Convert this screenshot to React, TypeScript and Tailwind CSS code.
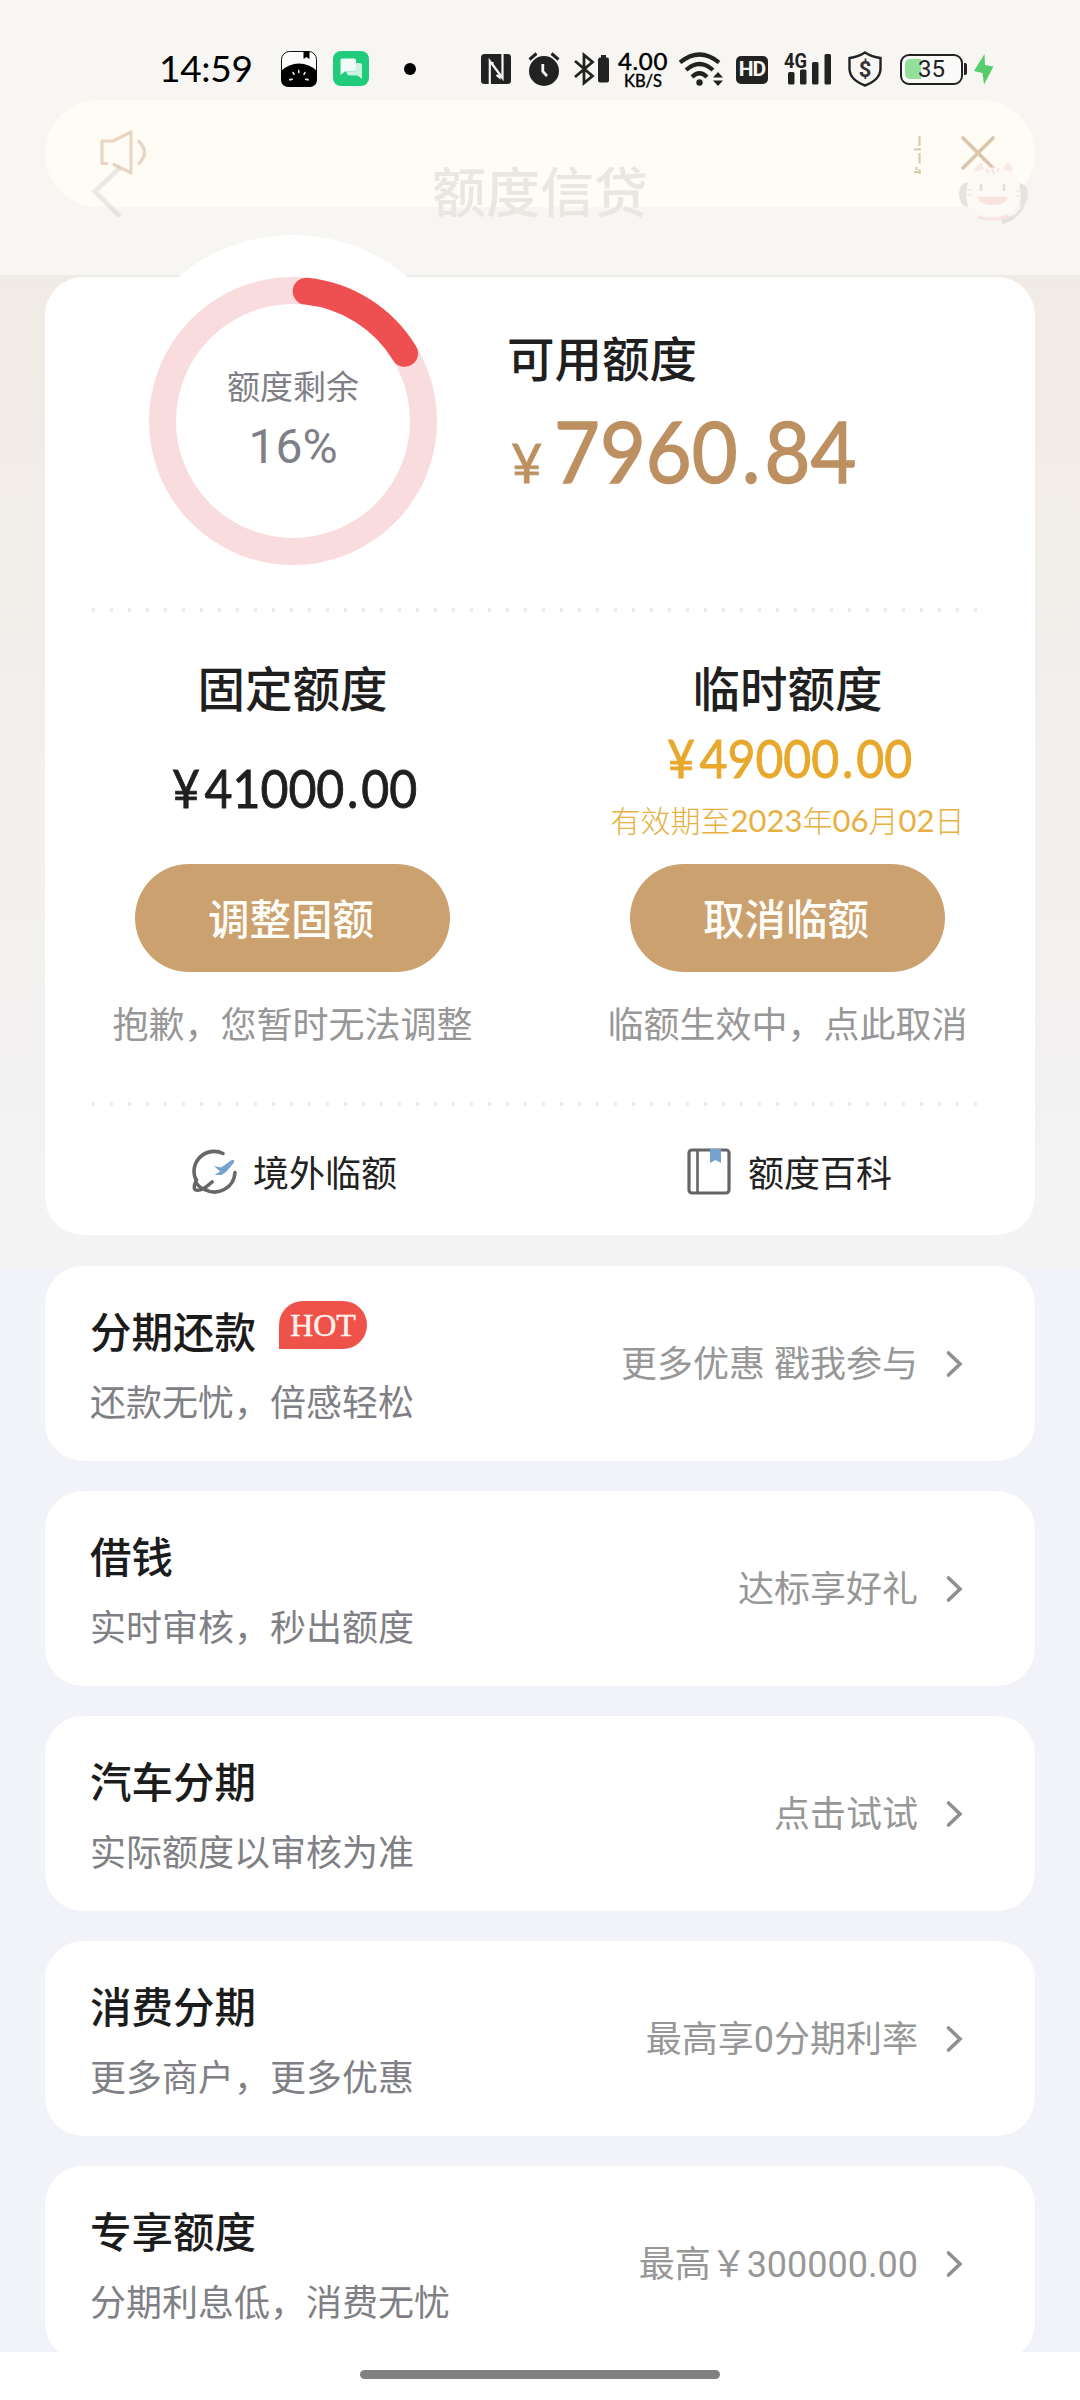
import { ReactNode } from "react";

const services = [
  { title: "分期还款", desc: "还款无忧，倍感轻松", action: "更多优惠 戳我参与", hot: true },
  { title: "借钱", desc: "实时审核，秒出额度", action: "达标享好礼" },
  { title: "汽车分期", desc: "实际额度以审核为准", action: "点击试试" },
  { title: "消费分期", desc: "更多商户，更多优惠", action: "最高享0分期利率" },
  { title: "专享额度", desc: "分期利息低，消费无忧", action: "最高￥300000.00" },
];

function StatusBar() {
  return (
    <div className="flex h-[100px] items-center pt-[38px] pl-[159px] font-['Lato','Noto_Sans_CJK_SC',sans-serif] text-black">
      <span className="w-[94px] pb-[3px] text-[37px] leading-none tracking-[-0.3px]">14:59</span>

      {/* notification icons */}
      <svg className="ml-[28px] h-9 w-9" viewBox="0 0 36 36">
        <rect x="0.5" y="0.5" width="35" height="35" rx="8" fill="#fdfdfd" stroke="#111" />
        <path d="M0 20 Q8 12.500 18 12.500 Q28 12.500 36 20 V28 Q36 36 28 36 H8 Q0 36 0 28 Z" fill="#000" />
        <path d="M22.500 0 H28.500 V8 L25.500 6 L22.500 8 Z" fill="#000" />
        <g fill="#eee">
          <ellipse cx="17.800" cy="20.500" rx="0.800" ry="2" />
          <ellipse cx="12.500" cy="22.500" rx="0.800" ry="2" transform="rotate(-30 12.5 22.5)" />
          <ellipse cx="23.500" cy="22.500" rx="0.800" ry="2" transform="rotate(30 23.5 22.5)" />
          <ellipse cx="10" cy="28.500" rx="2.200" ry="0.900" transform="rotate(-10 10 28.5)" />
          <ellipse cx="25.800" cy="28.500" rx="2.200" ry="0.900" transform="rotate(10 25.8 28.5)" />
        </g>
      </svg>
      <svg className="ml-4 h-9 w-9" viewBox="0 0 36 36">
        <rect width="36" height="35" rx="8" fill="#20cb7b" />
        <path d="M9 7.500 H21 Q23 7.500 23 9.500 V18 Q23 20.500 20.500 20.500 H12 L7.500 24 V9.500 Q7.500 7.500 9 7.500 Z" fill="#f2fcf7" />
        <path d="M16 12 H26.500 Q29 12 29 14.500 V28 L24.500 24.500 H17 Q13.500 24.500 13.500 20.500 H20 Q23 20.500 23 18 V12 Z" fill="#c9f3df" />
      </svg>
      <span className="ml-[35px] h-3 w-3 rounded-full bg-black" />

      {/* system icons */}
      <svg className="ml-[65px] h-[30px] w-[30px]" viewBox="0 0 30 30">
        <rect width="30" height="30" rx="3.500" fill="#222" />
        <path d="M8.800 30 V7 L18.500 20 V23.500 L15.500 21 M21.500 0 V24 L11.500 10.500 V8" fill="none" stroke="#f7f6f3" strokeWidth="2.200" />
      </svg>
      <svg className="ml-[17px] h-[34px] w-[32px]" viewBox="0 0 32 34">
        <circle cx="16" cy="19" r="15" fill="#222" />
        <path d="M1.500 7.500 L8.500 1.500 M30.500 7.500 L23.500 1.500" stroke="#222" strokeWidth="3" />
        <path d="M14.800 12 V19.500 L19 24" fill="none" stroke="#f7f6f3" strokeWidth="2.800" />
      </svg>
      <svg className="ml-[14px] h-[34px] w-[35px]" viewBox="0 0 35 34">
        <path d="M1 9 L18.500 24 L10 31 V3 L18.500 10 L1 25" fill="none" stroke="#222" strokeWidth="2.800" />
        <rect x="24" y="5.500" width="11" height="25" rx="2" fill="#222" />
        <rect x="27" y="3" width="5" height="3" fill="#222" />
      </svg>
      <div className="ml-[7px] flex w-[54px] flex-col items-center">
        <span className="text-[24px] leading-[23px] tracking-[0.6px] [-webkit-text-stroke:0.5px_black]">4.00</span>
        <span className="text-[16.500px] leading-[18px] [-webkit-text-stroke:0.4px_black]">KB/S</span>
      </div>
      <svg className="ml-[9px] h-[34px] w-[46px]" viewBox="0 0 46 34">
        <g fill="none" stroke="#222" strokeWidth="4.200">
          <path d="M1 10.500 Q20.500 -5.500 40 10.500" />
          <path d="M7 18 Q20.500 6 34 18" />
          <path d="M13 25 Q20.500 17.500 28 25" />
        </g>
        <circle cx="20.500" cy="30.500" r="3.200" fill="#222" />
        <path d="M34 25.500 L39 20 L44 25.500 Z M34 28.500 L39 34 L44 28.500 Z" fill="#222" />
      </svg>
      <span className="mt-px ml-[11px] flex h-7 w-8 items-center justify-center rounded-[5px] bg-[#222] font-['Roboto',sans-serif] text-[21px] leading-none font-bold tracking-[-1px] text-[#f7f6f3]">
        HD
      </span>
      <svg className="ml-4 h-[34px] w-12 overflow-visible" viewBox="0 0 48 34">
        <text x="0" y="15.5" fontSize="20" fontWeight="700" textLength="23" lengthAdjust="spacingAndGlyphs" fill="#222" fontFamily="Roboto, sans-serif">
          4G
        </text>
        <g fill="#222">
          <rect x="4" y="20" width="6.500" height="12.500" rx="1.500" />
          <rect x="16" y="17.500" width="6.500" height="15" rx="1.500" />
          <rect x="28" y="10" width="6.500" height="22.500" rx="1.500" />
          <rect x="40.500" y="2" width="6.500" height="30.500" rx="1.500" />
        </g>
      </svg>
      <svg className="ml-[16px] h-9 w-[34px]" viewBox="0 0 34 36">
        <path d="M17 1.500 Q24 6 32.500 7 V18 Q32 29 17 34.500 Q2 29 1.500 18 V7 Q10 6 17 1.500 Z" fill="none" stroke="#222" strokeWidth="2.400" />
        <text x="17" y="25.500" textAnchor="middle" fontSize="22" fontWeight="700" fill="#333" fontFamily="Roboto, sans-serif">
          $
        </text>
      </svg>
      <div className="relative ml-[18px] flex h-[31px] w-[63px] items-center justify-center rounded-[9px] border-[2.5px] border-[#222] bg-[#fafaf9]">
        <span className="absolute top-[3px] left-[2.5px] h-5 w-[16px] rounded-l-[5px] bg-[#92e09c]" />
        <span className="relative font-['Roboto',sans-serif] text-[24px] leading-none text-[#222]">35</span>
      </div>
      <span className="ml-px h-3 w-[3px] rounded-r-[2px] bg-[#222]" />
      <svg className="ml-[7px] h-8 w-5" viewBox="0 0 20 32">
        <path d="M10.500 1 L0 18 L8.500 20 L10 31.500 L19.500 13.500 L11 12 Z" fill="#55cd6d" />
      </svg>
    </div>
  );
}

function NoticePill() {
  return (
    <div className="absolute top-[100px] left-[45px] flex h-[107px] w-[990px] items-start rounded-full bg-[#fefcf5] pt-[29px] pl-[53px]">
      <svg className="h-[48px] w-[52px]" viewBox="0 0 52 48" fill="none" stroke="#e8d5c4" strokeWidth="3.200" strokeLinecap="round" strokeLinejoin="round">
        <path d="M9 34.500 H4 V12 H15 L33 3 V44 L16 35.500" />
        <path d="M41 12.500 Q52 23.500 41 34.500" />
      </svg>
      <svg className="mt-[7px] ml-[763px] h-[38px] w-[10px]" viewBox="0 0 10 38" fill="none" stroke="#d9ccb2" strokeWidth="2.200">
        <path d="M6.500 0 V10 M1 13.500 H8 M6.500 12 V14.500 M6.500 17 V27.500 M3.500 31 V34 M1 36 H8 M6.500 33 V38" />
      </svg>
      <svg className="mt-[6px] ml-[37px] h-[36px] w-[36px]" viewBox="0 0 36 36" stroke="#dcc6ae" strokeWidth="3.600" strokeLinecap="round">
        <path d="M3 3 L33 33 M33 3 L3 33" />
      </svg>
    </div>
  );
}

function NavBar() {
  return (
    <div className="relative flex h-[175px] items-start pt-[60px] pl-[90px]">
      <svg className="mt-[4px] h-[56px] w-[72px]" viewBox="0 0 72 56" fill="none" stroke="#b9b8b6" strokeOpacity="0.28" strokeWidth="5">
        <path d="M30 3.500 L5 27.500 L30 52.500" />
      </svg>
      <h1 className="mt-[2px] ml-[270px] w-[216px] text-[54px] leading-[66px] font-medium text-[#eae7e2]">额度信贷</h1>
      {/* customer service mascot */}
      <svg className="-mt-[8px] ml-[310px] h-[72px] w-[72px]" viewBox="0 0 72 72" fill="none">
        <path d="M13 24 Q36 8 59 24 Q68 44 56 58 Q36 70 16 58 Q4 44 13 24 Z" fill="#fdfaf5" />
        <path d="M16 20 Q17 11 24 11 Q25 13 26 17 Z M45 17 Q47 11 52 11 Q55 14 54 20 Z" fill="#fbe9e4" />
        <path d="M28 17 L31 21 M34 15 L36 23 M41 16 L39 20" stroke="#fae6e1" strokeWidth="2.200" />
        <path d="M10 30 Q1 31 1 43 Q2 54 10 55 L8 43 Z M61 31 Q70 32 70 43 Q69 53 62 55 L63 43 Z" fill="#e5e3df" />
        <path d="M8 38 H14 M8 43 H14 M58 39 H64 M58 44 H64" stroke="#eeece8" strokeWidth="1.500" />
        <path d="M23 32 V39 M46 32 V39" stroke="#e3e0db" strokeWidth="2.600" />
        <path d="M19 44.500 H50 Q48 53 34.500 53 Q21 53 19 44.500 Z" fill="#f9e4df" />
        <path d="M20 65 Q35 70 50 64" stroke="#f9e4e2" strokeWidth="3" />
        <path d="M66 52 Q62 63 51 67" stroke="#e5e4e0" strokeWidth="2.500" />
        <path d="M56 65 L44 70" stroke="#e2e1dd" strokeWidth="4.500" />
      </svg>
    </div>
  );
}

function QuotaRing() {
  // 16% of the circumference, starting just past twelve o'clock
  const length = 2 * Math.PI * 130.5;
  return (
    <div className="relative h-[288px] w-[288px]">
      <svg className="absolute inset-0" viewBox="0 0 288 288" fill="none" strokeWidth="27">
        <circle cx="144" cy="144" r="130.500" stroke="#f9dcdd" />
        <circle
          cx="144"
          cy="144"
          r="130.500"
          stroke="#ee5052"
          strokeLinecap="round"
          strokeDasharray={`${length * 0.147} ${length}`}
          transform="rotate(-84.2 144 144)"
        />
      </svg>
      <div className="relative flex flex-col items-center pt-[91px] text-[#7f8087]">
        <span className="text-[33px] leading-[40px]">额度剩余</span>
        <span className="mt-[13px] text-[48px] leading-[52px]">16%</span>
      </div>
    </div>
  );
}

function DottedLine() {
  return (
    <svg className="ml-[47px] block h-1 w-[886px]" viewBox="0 0 886 4">
      <path d="M0 2 H886" stroke="#ececec" strokeWidth="4" strokeDasharray="3 15" />
    </svg>
  );
}

function QuotaColumn({ title, button, hint, children }: { title: string; button: string; hint: string; children: ReactNode }) {
  return (
    <div className="flex flex-1 flex-col items-center">
      <h2 className="mt-[49px] text-[47.500px] leading-[60px] font-medium text-[#1f1f1f]">{title}</h2>
      <div className="flex h-[143px] flex-col items-center">{children}</div>
      <button className="h-[108px] w-[315px] rounded-full bg-[#cba16f] pt-[6px] pr-[3px] text-[41.500px] font-medium text-[#fffdf8]">{button}</button>
      <p className="mt-[32px] text-[36px] leading-[44px] text-[#979797]">{hint}</p>
    </div>
  );
}

function QuotaCard() {
  return (
    <section className="relative mx-[45px] h-[958px] rounded-[38px] bg-white">
      <span className="absolute -top-[42px] left-[70px] h-[356px] w-[356px] rounded-full bg-white" />

      <div className="relative flex h-[331px]">
        <div className="flex w-[462px] pl-[104px]">
          <QuotaRing />
        </div>
        <div className="pt-[54px]">
          <h2 className="text-[47.500px] leading-[60px] font-medium text-[#1f1f1f]">可用额度</h2>
          <div className="mt-[16px] flex items-baseline font-['Lato','Noto_Sans_CJK_SC',sans-serif] text-[#bd9062]">
            <span className="w-[47px] pl-[4px] text-[54px] leading-[86px] [-webkit-text-stroke:0.8px_#bd9062]">¥</span>
            <span className="origin-left scale-x-[0.92] text-[86px] leading-[86px] [-webkit-text-stroke:1.5px_#bd9062]">
              7960<span className="px-[4.5px]">.</span>84
            </span>
          </div>
        </div>
      </div>

      <DottedLine />

      <div className="flex h-[490px]">
        <QuotaColumn title="固定额度" button="调整固额" hint="抱歉，您暂时无法调整">
          <span className="mt-[37px] scale-x-[0.91] pl-[4px] font-['Lato',sans-serif] text-[53px] leading-[60px] text-[#1f1f1f] [-webkit-text-stroke:0.9px_#1f1f1f]">
            <span className="pr-[5px]">¥</span>41000<span className="px-[3px]">.</span>00
          </span>
        </QuotaColumn>
        <QuotaColumn title="临时额度" button="取消临额" hint="临额生效中，点此取消">
          <span className="mt-[7px] scale-x-[0.91] pl-[5px] font-['Lato',sans-serif] text-[53px] leading-[60px] text-[#e8a82c] [-webkit-text-stroke:0.9px_#e8a82c]">
            <span className="pr-[5px]">¥</span>49000<span className="px-[3px]">.</span>00
          </span>
          <span className="mt-[12px] font-['Lato','Noto_Sans_CJK_SC',sans-serif] text-[30px] leading-[40px] font-light text-[#e8b040]">
            有效期至<b className="text-[31px] font-normal">2023</b>年<b className="text-[31px] font-normal">06</b>月<b className="text-[31px] font-normal">02</b>日
          </span>
        </QuotaColumn>
      </div>

      <DottedLine />

      <div className="flex h-[126px] pt-[42px] text-[36px] leading-[50px] text-[#222]">
        <div className="flex flex-1 pl-[147px]">
          <svg className="mt-px mr-[15px] h-[46px] w-[46px]" viewBox="0 0 46 46" fill="none" strokeLinecap="round" strokeLinejoin="round">
            <g stroke="#666769" strokeWidth="3.600">
              <path d="M31 4.500 A20 20 0 0 0 4 31" />
              <path d="M43 23.500 A20.500 20.500 0 0 1 12 40" />
              <path d="M4.500 31 Q1 38 3 40.500 Q8 44 20 33" />
              <path d="M5 35 Q9 40 14 41" />
            </g>
            <path d="M22 17 L29 18.500 L39 11.500 Q43 9.500 42 13.500 L37.500 19 Q34 24 29.500 26 L22.500 26 L28 22.500 Z" fill="#76a2cf" />
          </svg>
          <span className="pt-[2px]">境外临额</span>
        </div>
        <div className="flex flex-1 pl-[147px]">
          <svg className="mr-[17px] h-[47px] w-[44px]" viewBox="0 0 44 47" fill="none">
            <rect x="2" y="2" width="40" height="43" rx="3" stroke="#646567" strokeWidth="3.200" />
            <path d="M10.500 2 V45" stroke="#646567" strokeWidth="2.600" />
            <path d="M23 1 H34 V15 L28.500 12 L23 15 Z" fill="#76a2cf" />
          </svg>
          <span className="pt-[2px]">额度百科</span>
        </div>
      </div>
    </section>
  );
}

export default function App() {
  return (
    <main className="relative flex h-[2400px] w-[1080px] flex-col overflow-hidden bg-[#f2f3f8] font-['Roboto','Noto_Sans_CJK_SC',sans-serif]">
      <header className="relative h-[275px] shrink-0 bg-[#f7f6f3]">
        <NoticePill />
        <StatusBar />
        <NavBar />
      </header>

      <div className="h-[991px] shrink-0 bg-linear-to-b from-[#f1ebe5] to-[#f4f4f5]">
        <div className="mx-[80px] h-0.5 bg-[#ebece9]" />
        <QuotaCard />
      </div>

      <div className="flex h-[1086px] shrink-0 flex-col gap-[30px] overflow-hidden px-[45px]">
        {services.map((s) => (
          <section key={s.title} className="flex h-[195px] shrink-0 items-center rounded-[38px] bg-white pr-[70px] pl-[45px]">
            <div className="flex-1 pt-[5px]">
              <div className="flex h-[60px] items-center">
                <h3 className="text-[41.500px] leading-[60px] font-medium text-[#1c1c1c]">{s.title}</h3>
                {s.hot && (
                  <span className="mb-[18px] ml-[23px] flex h-12 w-[88px] items-center justify-center rounded-[24px] rounded-bl-none bg-[#ef5249] font-['Liberation_Serif',serif] text-[32px] leading-none text-[#fff1ee] [-webkit-text-stroke:0.5px_#fff1ee]">
                    HOT
                  </span>
                )}
              </div>
              <p className="mt-[15px] text-[36px] leading-[50px] text-[#7f8085]">{s.desc}</p>
            </div>
            <span className="pt-[3px] text-[36px] leading-[50px] text-[#979797]">{s.action}</span>
            <svg className="ml-[27px] h-[28px] w-[20px]" viewBox="0 0 20 28" fill="none" stroke="#8f8f8f" strokeWidth="3.600" strokeLinecap="round">
              <path d="M3.500 3 L15 14 L3.500 25" />
            </svg>
          </section>
        ))}
      </div>

      <footer className="flex h-12 shrink-0 justify-center bg-white pt-[18px]">
        <span className="h-[9px] w-[360px] rounded-full bg-[#808080]" />
      </footer>
    </main>
  );
}
